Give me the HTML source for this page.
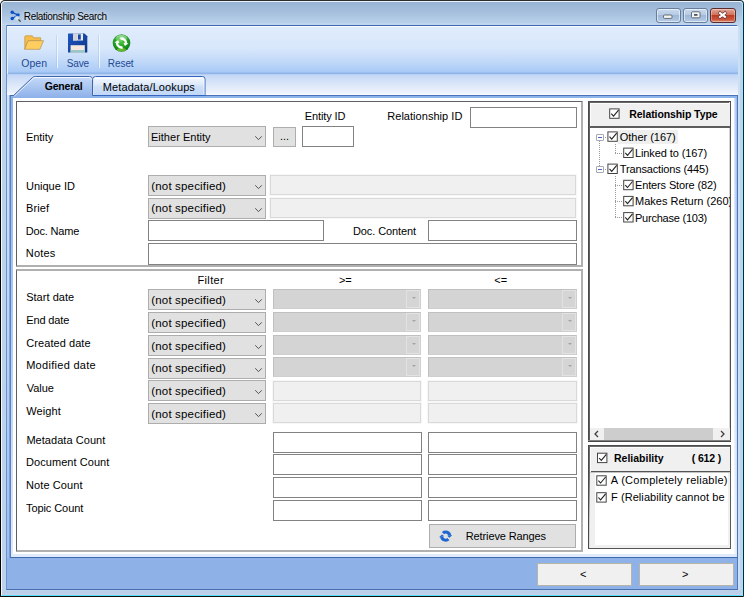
<!DOCTYPE html>
<html lang="en"><head><meta charset="utf-8"><title>Relationship Search</title>
<style>
html,body{margin:0;padding:0;background:#fff}
body{width:745px;height:600px;overflow:hidden;position:relative;font-family:"Liberation Sans",sans-serif}
.a{position:absolute;box-sizing:border-box}
.t{position:absolute;white-space:nowrap;display:block}
svg{position:absolute;overflow:visible}
/* window frame */
#w0{left:0;top:0;width:744px;height:597px;background:linear-gradient(to right,#000 0,#2c2c2c 6px,#2c2c2c 735px,#042c38 100%);border-radius:5px 4px 1px 1px}
#w1{left:1px;top:1px;width:742px;height:595px;border-radius:4px 3px 0 0;background:#fff;
 border-top:1px solid #e9f3fb;border-left:1px solid #f4f8fd;border-right:1px solid #9fe3ff;border-bottom:1px solid #4fe3ff;
 }
#w2{left:2px;top:2px;width:740px;height:593px;border-radius:3px 2px 0 0;
 background:linear-gradient(to bottom,#93afcf 0,#9bb6d5 1px,#a3bddb 9px,#b9d1eb 21px,#c4d8ef 22px,#bbd3ec 24px,#bbd3ec 100%)}
#w2b{left:2px;top:590px;width:740px;height:5px;background:linear-gradient(to bottom,#bcd3ec 0,#b9cfe9 3px,#cfd0e8 5px)}
#cl{left:6px;top:25px;width:732px;height:565px;background:#8eb1e8;border:1px solid #4068ae;border-left-color:#6e92c8;border-right-color:#5277b8;border-bottom-color:#4a70b0;border-radius:0 2px 0 0}
#rfr{left:738px;top:27px;width:2px;height:563px;background:#cbdff5}
/* toolbar */
#tb{left:7px;top:26px;width:731px;height:48px;background:linear-gradient(to bottom,#f4faff 0,#f4faff 1px,#e0ecfc 1px,#d8e7fb 22px,#c4dbf9 34px,#a9c9f6 46px,#8fb4e8 47px,#8fb4e8 48px)}
#tbl{left:7px;top:26px;width:1px;height:48px;background:#eaf2fd}
.sep{width:1px;top:35px;height:33px;background:#f0f6fe;box-shadow:-1px 0 0 rgba(150,180,225,.35)}
/* tab strip */
#ts{left:7px;top:74px;width:731px;height:21px;background:linear-gradient(to bottom,#a8c8f4 0,#c4d7f5 1px,#d6e3f8 8px,#eef3fc 19px,#fafcff 21px)}
#pg{left:10px;top:95px;width:728px;height:463px;background:linear-gradient(to bottom,#8eb4ec 0,#a9c8f3 45%,#cfe0f8 80%,#dfeafb 100%);border:1px solid #5b82c4;border-right-color:#5277b8;border-top-color:#4a74ba;border-bottom-color:#4068ae}
#pgl{left:7px;top:95px;width:3px;height:463px;background:linear-gradient(to right,rgba(0,0,0,0) 0,rgba(0,0,0,0) 2px,rgba(70,110,180,.45) 2px),linear-gradient(to bottom,#d2e3fa 0,#bdd6f7 45%,#9dbef0 100%)}
#pw{left:13px;top:98px;width:721px;height:456px;background:#fff}
#pgt{left:11px;top:96px;width:726px;height:2px;background:#8eb4ec}
#pgr{left:734px;top:98px;width:3px;height:456px;background:linear-gradient(to right,rgba(255,255,255,.75),rgba(255,255,255,0))}
/* panels */
.pn{background:#fff;border-style:solid;border-color:#606060 #b0b0b0 #b0b0b0 #606060}
.tx{background:#fff;border:1px solid #828282}
.dt{background:#f0f0f0;border:1px solid #d9d9d9;box-shadow:0 0 0 1px #f7f7f7}
.cb{background:#e1e1e1;border:1px solid #adadad}
.dc{background:#d4d4d4;border:1px solid;border-color:#c0c0c0 #cfcfcf #cfcfcf #c0c0c0}
.dc i{position:absolute;right:0;top:0;bottom:0;width:14px;box-sizing:border-box;border:1px solid #e2e2e2;background:#d5d5d5}
.dc b{position:absolute;right:4px;top:7px;width:0;height:0;border:2px solid transparent;border-top:2.500px solid #a4a4a4;border-bottom:0}
.bt{background:#e1e1e1;border:1px solid #adadad}
.nb{background:#f0f0f0;border:1px solid #b7b4aa}
.ck{background:#fff;border:1px solid #333}
.rp{background:#fff;border:1px solid #4c4c4c;box-shadow:inset 0 0 0 1px #686868}
.hd{background:#f0f0f0;border-bottom:2px solid #5c5c5c;box-shadow:inset 1px 1px 0 #fcfcfc}
#t0{text-shadow:0 0 4px rgba(255,255,255,.75),0 0 7px rgba(255,255,255,.5)}

.wb{border:1px solid #667d9b;border-radius:3px;background:linear-gradient(to bottom,#c9daee 0,#b4cae5 45%,#9fb8d8 50%,#b4cbe6 100%);box-shadow:inset 0 0 0 1px rgba(255,255,255,.55)}
.wc{border-color:#5a2a2c;background:linear-gradient(to bottom,#e2a697 0,#d0725c 45%,#bd3c22 50%,#c9563c 80%,#dc8c72 100%);box-shadow:inset 0 0 0 1px rgba(255,255,255,.35)}
</style></head><body>
<div class="a" id="w0"></div><div class="a" style="left:0;top:596px;width:743px;height:1px;background:#120c0c"></div><div class="a" id="w1"></div><div class="a" id="w2"></div><div class="a" id="w2b"></div>
<div class="a" id="cl"></div><div class="a" id="rfr"></div>
<div class="a" id="tb"></div><div class="a" id="tbl"></div>
<div class="a sep" style="left:57px"></div><div class="a sep" style="left:99px"></div>
<div class="a" id="ts"></div>
<div class="a" id="pgl"></div><div class="a" id="pg"></div><div class="a" id="pgt"></div><div class="a" id="pw"></div><div class="a" id="pgr"></div>

<svg class="a" style="left:0;top:0" width="745" height="100" viewBox="0 0 745 100">
<defs>
<linearGradient id="gt" x1="0" y1="0" x2="0" y2="1"><stop offset="0" stop-color="#cfe0f9"/><stop offset=".15" stop-color="#bdd4f6"/><stop offset="1" stop-color="#8cb0e9"/></linearGradient>
<linearGradient id="mt" x1="0" y1="0" x2="0" y2="1"><stop offset="0" stop-color="#f6f9fe"/><stop offset=".45" stop-color="#dbe8fa"/><stop offset=".5" stop-color="#cfe0f8"/><stop offset="1" stop-color="#c0d7f6"/></linearGradient>
</defs>
<path d="M93,95.5 V79 Q93,76.5 95.5,76.5 H202.500 Q205,76.500 205,79 V95.5 Z" fill="url(#mt)" stroke="#3565c0" stroke-width="1"/>
<path d="M93.5,95 V78.5 H204 V95" fill="none" stroke="#fff" stroke-opacity=".7" stroke-width="1"/>
<path d="M11,98 V96 L13.500,95.5 L32.500,77.500 Q33.500,76.500 35.500,76.500 H89.500 Q92.500,76.500 92.500,79.500 V96 V98 Z" fill="url(#gt)"/>
<path d="M10.500,95.500 H13.500 L32.500,77.500 Q33.500,76.500 35.500,76.500 H89.500 Q92.500,76.500 92.500,79.500 V95.500" fill="none" stroke="#3f66ad" stroke-width="1"/>
<path d="M14.500,96 L33.500,78.100 Q34.200,77.500 35.500,77.500 H89.500 Q91.500,77.500 91.500,79.500" fill="none" stroke="#fff" stroke-opacity=".75" stroke-width="1"/>
</svg>


<svg class="a" style="left:0;top:0" width="745" height="75" viewBox="0 0 745 75">
<defs>
<linearGradient id="sv" x1="0" y1="0" x2="1" y2="1"><stop offset="0" stop-color="#1f55c4"/><stop offset="1" stop-color="#0d3888"/></linearGradient>
<radialGradient id="gr" cx=".45" cy=".35" r=".7"><stop offset="0" stop-color="#5ccf4a"/><stop offset=".55" stop-color="#22a022"/><stop offset="1" stop-color="#0b6e14"/></radialGradient>
<linearGradient id="gh" x1="0" y1="0" x2="0" y2="1"><stop offset="0" stop-color="#fff" stop-opacity=".55"/><stop offset="1" stop-color="#fff" stop-opacity="0"/></linearGradient>
</defs>
<!-- title icon -->
<g stroke="#0b4fc4" stroke-width="1.300" fill="#0b4fc4">
<path d="M12.200,12.300 L18,15 L12.200,18.500" fill="none"/>
<circle cx="12.200" cy="12.300" r="1.700" stroke="none"/><circle cx="18" cy="15" r="1.700" stroke="none"/><circle cx="12.200" cy="18.500" r="1.700" stroke="none"/>
</g>
<circle cx="17" cy="18.200" r="2" fill="#d9e4ee" stroke="#c3d6e6" stroke-width=".6"/>
<path d="M18.700,19.800 L20.300,21.300" stroke="#4a4a4a" stroke-width="1.200" stroke-linecap="round"/>
<!-- open -->
<path d="M24.800,49.200 V36.600 Q24.800,35.800 25.600,35.800 H32.400 L33.600,37.800 H40.700 V41 H28 Z" fill="#f7bd4a" stroke="#c39a4a" stroke-width=".8" stroke-linejoin="round"/>
<path d="M28,40.700 H43.500 L39.900,49.300 H24.700 Z" fill="#ffce5e" stroke="#b9975c" stroke-width=".8" stroke-linejoin="round"/>
<!-- save -->
<path d="M68,34.200 Q68,33.600 68.600,33.600 H84.600 L87.300,36.300 V52 Q87.300,52.600 86.700,52.600 H68.600 Q68,52.600 68,52 Z" fill="url(#sv)"/>
<rect x="73" y="33.600" width="10" height="6.900" fill="#ececec"/>
<rect x="73" y="33.600" width="4" height="6.900" fill="#d4d4d6"/>
<rect x="77.900" y="34.400" width="2.900" height="5.200" fill="#1848aa"/>
<rect x="70.600" y="45.200" width="14.200" height="7.400" fill="#f6e8dc"/>
<rect x="70.600" y="50" width="14.200" height="2.600" fill="#9ac7cb"/>
<!-- reset -->
<circle cx="121.500" cy="43" r="8.800" fill="url(#gr)"/>
<ellipse cx="121.500" cy="49.800" rx="4.500" ry="1.700" fill="#a4e23c" opacity=".55"/>
<ellipse cx="121.500" cy="38.500" rx="6" ry="3.600" fill="url(#gh)"/>
<g fill="none" stroke="#fff" stroke-width="2.300">
<path d="M122.66,47.35 A4.5,4.5 0 0 1 117.02,42.61"/>
<path d="M120.34,38.65 A4.5,4.5 0 0 1 125.98,43.39"/>
</g>
<path d="M118.10,40.05 L114.46,42.63 L119.55,42.90 Z" fill="#fff"/>
<path d="M124.90,45.95 L128.54,43.37 L123.45,43.10 Z" fill="#fff"/>
<!-- retrieve icon placed elsewhere -->
</svg>


<div class="a wb" style="left:656px;top:8px;width:25px;height:15px"></div>
<div class="a wb" style="left:683px;top:8px;width:25px;height:15px"></div>
<div class="a wb wc" style="left:710px;top:8px;width:26px;height:15px"></div>
<svg class="a" style="left:650px;top:0" width="95" height="26" viewBox="650 0 95 26">
<rect x="663.500" y="15" width="8.500" height="3.400" rx="1" fill="#f4f4f4" stroke="#5a5f68" stroke-width=".9"/>
<rect x="691.500" y="11.800" width="8.500" height="6" rx="1" fill="#f6f6f6" stroke="#5a5f68" stroke-width=".9"/>
<rect x="694" y="14" width="3.500" height="1.800" fill="#4a5668"/>
<path d="M720,13.100 L725,16.900 M725,13.100 L720,16.900" stroke="#6a3a38" stroke-width="3.300" stroke-linecap="square"/>
<path d="M720,13.100 L725,16.900 M725,13.100 L720,16.900" stroke="#fff" stroke-width="2" stroke-linecap="square"/>
</svg>

<!-- left top panel -->
<div class="a pn" style="left:16px;top:101px;width:567px;height:166px;border-width:1px 2px 2px 1px"></div>
<div class="a cb" style="left:148px;top:126px;width:118px;height:21px"></div>
<div class="a bt" style="left:273px;top:127px;width:23px;height:20px"></div>
<div class="a tx" style="left:302px;top:126px;width:52px;height:21px"></div>
<div class="a tx" style="left:470px;top:107px;width:107px;height:21px"></div>
<div class="a cb" style="left:148px;top:175px;width:118px;height:21px"></div>
<div class="a cb" style="left:148px;top:198px;width:118px;height:21px"></div>
<div class="a dt" style="left:270px;top:175px;width:306px;height:20px"></div>
<div class="a dt" style="left:270px;top:198px;width:306px;height:20px"></div>
<div class="a tx" style="left:148px;top:220px;width:176px;height:21px"></div>
<div class="a tx" style="left:428px;top:220px;width:149px;height:21px"></div>
<div class="a tx" style="left:148px;top:243px;width:429px;height:22px"></div>
<!-- left bottom panel -->
<div class="a pn" style="left:16px;top:269px;width:567px;height:283px;border-width:2px 2px 2px 1px;border-top-color:#b0b0b0;border-bottom-color:#b0b0b0"></div>
<div class="a cb" style="left:148px;top:289px;width:118px;height:21px"></div>
<svg class="a" style="left:254px;top:298px" width="9" height="6" viewBox="0 0 9 6"><path d="M1.200,1.300 L4.500,4.600 L7.800,1.300" fill="none" stroke="#4a4a4a" stroke-width="0.950"/></svg>
<div class="a cb" style="left:148px;top:312px;width:118px;height:21px"></div>
<svg class="a" style="left:254px;top:321px" width="9" height="6" viewBox="0 0 9 6"><path d="M1.200,1.300 L4.500,4.600 L7.800,1.300" fill="none" stroke="#4a4a4a" stroke-width="0.950"/></svg>
<div class="a cb" style="left:148px;top:335px;width:118px;height:21px"></div>
<svg class="a" style="left:254px;top:344px" width="9" height="6" viewBox="0 0 9 6"><path d="M1.200,1.300 L4.500,4.600 L7.800,1.300" fill="none" stroke="#4a4a4a" stroke-width="0.950"/></svg>
<div class="a cb" style="left:148px;top:358px;width:118px;height:21px"></div>
<svg class="a" style="left:254px;top:367px" width="9" height="6" viewBox="0 0 9 6"><path d="M1.200,1.300 L4.500,4.600 L7.800,1.300" fill="none" stroke="#4a4a4a" stroke-width="0.950"/></svg>
<div class="a cb" style="left:148px;top:380px;width:118px;height:21px"></div>
<svg class="a" style="left:254px;top:389px" width="9" height="6" viewBox="0 0 9 6"><path d="M1.200,1.300 L4.500,4.600 L7.800,1.300" fill="none" stroke="#4a4a4a" stroke-width="0.950"/></svg>
<div class="a cb" style="left:148px;top:403px;width:118px;height:21px"></div>
<svg class="a" style="left:254px;top:412px" width="9" height="6" viewBox="0 0 9 6"><path d="M1.200,1.300 L4.500,4.600 L7.800,1.300" fill="none" stroke="#4a4a4a" stroke-width="0.950"/></svg>
<div class="a dc" style="left:273px;top:289px;width:148px;height:20px"><i></i><b></b></div>
<div class="a dc" style="left:428px;top:289px;width:149px;height:20px"><i></i><b></b></div>
<div class="a dc" style="left:273px;top:312px;width:148px;height:20px"><i></i><b></b></div>
<div class="a dc" style="left:428px;top:312px;width:149px;height:20px"><i></i><b></b></div>
<div class="a dc" style="left:273px;top:335px;width:148px;height:20px"><i></i><b></b></div>
<div class="a dc" style="left:428px;top:335px;width:149px;height:20px"><i></i><b></b></div>
<div class="a dc" style="left:273px;top:357px;width:148px;height:20px"><i></i><b></b></div>
<div class="a dc" style="left:428px;top:357px;width:149px;height:20px"><i></i><b></b></div>
<div class="a dt" style="left:273px;top:381px;width:148px;height:20px"></div>
<div class="a dt" style="left:428px;top:381px;width:149px;height:20px"></div>
<div class="a dt" style="left:273px;top:403px;width:148px;height:20px"></div>
<div class="a dt" style="left:428px;top:403px;width:149px;height:20px"></div>
<div class="a tx" style="left:273px;top:432px;width:149px;height:21px"></div>
<div class="a tx" style="left:428px;top:432px;width:149px;height:21px"></div>
<div class="a tx" style="left:273px;top:454px;width:149px;height:21px"></div>
<div class="a tx" style="left:428px;top:454px;width:149px;height:21px"></div>
<div class="a tx" style="left:273px;top:477px;width:149px;height:21px"></div>
<div class="a tx" style="left:428px;top:477px;width:149px;height:21px"></div>
<div class="a tx" style="left:273px;top:500px;width:149px;height:21px"></div>
<div class="a tx" style="left:428px;top:500px;width:149px;height:21px"></div>
<svg class="a" style="left:254px;top:135px" width="9" height="6" viewBox="0 0 9 6"><path d="M1.200,1.300 L4.500,4.600 L7.800,1.300" fill="none" stroke="#4a4a4a" stroke-width="0.950"/></svg>
<svg class="a" style="left:254px;top:184px" width="9" height="6" viewBox="0 0 9 6"><path d="M1.200,1.300 L4.500,4.600 L7.800,1.300" fill="none" stroke="#4a4a4a" stroke-width="0.950"/></svg>
<svg class="a" style="left:254px;top:207px" width="9" height="6" viewBox="0 0 9 6"><path d="M1.200,1.300 L4.500,4.600 L7.800,1.300" fill="none" stroke="#4a4a4a" stroke-width="0.950"/></svg>
<div class="a bt" style="left:429px;top:524px;width:147px;height:24px"></div>
<svg class="a" style="left:438px;top:528px" width="16" height="16" viewBox="438 528 16 16">
<g fill="none" stroke="#1e66d0" stroke-width="3">
<path d="M442.96,533.05 A4.1,4.1 0 0 1 449.76,535.53"/>
<path d="M448.44,539.15 A4.1,4.1 0 0 1 441.64,536.67"/>
</g>
<path d="M449.45,537.77 L452.33,534.93 L447.14,535.85 Z" fill="#1e66d0"/>
<path d="M441.95,534.43 L439.07,537.27 L444.26,536.35 Z" fill="#1e66d0"/>
</svg>

<div class="a nb" style="left:537px;top:563px;width:95px;height:23px"></div>
<div class="a nb" style="left:639px;top:563px;width:95px;height:23px"></div>
<!-- right top panel -->
<div class="a" style="left:588px;top:101px;width:143px;height:341px;background:#fff"></div>
<div class="a" style="left:588px;top:101px;width:143px;height:2px;background:linear-gradient(to bottom,#4a4a4a 50%,#686868 50%)"></div>
<div class="a" style="left:588px;top:101px;width:2px;height:341px;background:linear-gradient(to right,#4a4a4a 50%,#606060 50%)"></div>
<div class="a" style="left:729px;top:102px;width:2px;height:340px;background:linear-gradient(to right,#d4d4d4 50%,#505050 50%)"></div>
<div class="a" style="left:588px;top:440px;width:143px;height:2px;background:linear-gradient(to bottom,#808080 50%,#484848 50%)"></div>
<div class="a hd" style="left:590px;top:103px;width:140px;height:25px"></div>
<div class="a" style="left:618px;top:130px;width:60px;height:14px;background:#efefef"></div>
<div class="a" style="left:590px;top:428px;width:140px;height:12px;background:#f0f0f0"></div>
<div class="a" style="left:604px;top:428px;width:109px;height:12px;background:#cdcdcd"></div>
<div class="a" style="left:599px;top:141px;width:1px;height:25px;background:repeating-linear-gradient(to bottom,#9a9a9a 0,#9a9a9a 1px,transparent 1px,transparent 2px)"></div>
<div class="a" style="left:603px;top:137px;width:4px;height:1px;background:repeating-linear-gradient(to right,#9a9a9a 0,#9a9a9a 1px,transparent 1px,transparent 2px)"></div>
<div class="a" style="left:603px;top:169px;width:4px;height:1px;background:repeating-linear-gradient(to right,#9a9a9a 0,#9a9a9a 1px,transparent 1px,transparent 2px)"></div>
<div class="a" style="left:615px;top:144px;width:1px;height:10px;background:repeating-linear-gradient(to bottom,#9a9a9a 0,#9a9a9a 1px,transparent 1px,transparent 2px)"></div>
<div class="a" style="left:615px;top:153px;width:8px;height:1px;background:repeating-linear-gradient(to right,#9a9a9a 0,#9a9a9a 1px,transparent 1px,transparent 2px)"></div>
<div class="a" style="left:615px;top:176px;width:1px;height:42px;background:repeating-linear-gradient(to bottom,#9a9a9a 0,#9a9a9a 1px,transparent 1px,transparent 2px)"></div>
<div class="a" style="left:615px;top:185px;width:8px;height:1px;background:repeating-linear-gradient(to right,#9a9a9a 0,#9a9a9a 1px,transparent 1px,transparent 2px)"></div>
<div class="a" style="left:615px;top:201px;width:8px;height:1px;background:repeating-linear-gradient(to right,#9a9a9a 0,#9a9a9a 1px,transparent 1px,transparent 2px)"></div>
<div class="a" style="left:615px;top:217px;width:8px;height:1px;background:repeating-linear-gradient(to right,#9a9a9a 0,#9a9a9a 1px,transparent 1px,transparent 2px)"></div>
<div class="a" style="left:596px;top:134px;width:8px;height:7px;background:#fff;border:1px solid #a6a9b0;border-radius:1px"></div>
<div class="a" style="left:598px;top:137px;width:4px;height:1px;background:#4a66c4"></div>
<div class="a" style="left:596px;top:166px;width:8px;height:7px;background:#fff;border:1px solid #a6a9b0;border-radius:1px"></div>
<div class="a" style="left:598px;top:169px;width:4px;height:1px;background:#4a66c4"></div>
<svg class="a" style="left:607px;top:131px" width="12" height="12" viewBox="0 0 12 12"><rect x="0.90" y="0.90" width="9.400" height="9.400" fill="#fff" stroke="#444" stroke-width="1"/><path d="M2.50,5.70 l2.200,2.400 l5,-6" fill="none" stroke="#222" stroke-width="1.100"/></svg>
<svg class="a" style="left:623px;top:147px" width="12" height="12" viewBox="0 0 12 12"><rect x="0.70" y="1.10" width="9.400" height="9.400" fill="#fff" stroke="#444" stroke-width="1"/><path d="M2.30,5.90 l2.200,2.400 l5,-6" fill="none" stroke="#222" stroke-width="1.100"/></svg>
<svg class="a" style="left:607px;top:163px" width="12" height="12" viewBox="0 0 12 12"><rect x="0.90" y="1.10" width="9.400" height="9.400" fill="#fff" stroke="#444" stroke-width="1"/><path d="M2.50,5.90 l2.200,2.400 l5,-6" fill="none" stroke="#222" stroke-width="1.100"/></svg>
<svg class="a" style="left:623px;top:179px" width="12" height="12" viewBox="0 0 12 12"><rect x="0.70" y="1.30" width="9.400" height="9.400" fill="#fff" stroke="#444" stroke-width="1"/><path d="M2.30,6.10 l2.200,2.400 l5,-6" fill="none" stroke="#222" stroke-width="1.100"/></svg>
<svg class="a" style="left:623px;top:195px" width="12" height="12" viewBox="0 0 12 12"><rect x="0.70" y="1.40" width="9.400" height="9.400" fill="#fff" stroke="#444" stroke-width="1"/><path d="M2.30,6.20 l2.200,2.400 l5,-6" fill="none" stroke="#222" stroke-width="1.100"/></svg>
<svg class="a" style="left:623px;top:212px" width="12" height="12" viewBox="0 0 12 12"><rect x="0.70" y="0.60" width="9.400" height="9.400" fill="#fff" stroke="#444" stroke-width="1"/><path d="M2.30,5.40 l2.200,2.400 l5,-6" fill="none" stroke="#222" stroke-width="1.100"/></svg>
<svg class="a" style="left:590px;top:428px" width="140" height="12" viewBox="0 0 140 12"><path d="M8,3 L5,6 L8,9" fill="none" stroke="#404040" stroke-width="1.300"/><path d="M131,3 L134,6 L131,9" fill="none" stroke="#404040" stroke-width="1.300"/></svg>
<!-- right bottom panel -->
<div class="a" style="left:588px;top:445px;width:143px;height:104px;background:#f0f0f0"></div>
<div class="a hd" style="left:590px;top:447px;width:140px;height:26px;border-bottom:1px solid #c4c4c4;box-shadow:inset 1px 1px 0 #fcfcfc, inset 0 -1px 0 #555"></div>
<div class="a" style="left:588px;top:445px;width:143px;height:2px;background:linear-gradient(to bottom,#4c4c4c 50%,#6a6a6a 50%)"></div>
<div class="a" style="left:588px;top:445px;width:1px;height:104px;background:#4a4a4a"></div>
<div class="a" style="left:589px;top:446px;width:1px;height:102px;background:linear-gradient(to bottom,#686868 0,#707070 30%,#c8c8c8 70%,#e0e0e0 100%)"></div>
<div class="a" style="left:730px;top:446px;width:1px;height:103px;background:#5a5a5a"></div>
<div class="a" style="left:588px;top:548px;width:143px;height:1px;background:#555"></div>
<div class="a" style="left:595px;top:473px;width:133px;height:72px;background:#fff"></div>
<svg class="a" style="left:609px;top:108px" width="12" height="12" viewBox="0 0 12 12"><rect x="0.70" y="0.90" width="9.400" height="9.400" fill="#fff" stroke="#444" stroke-width="1"/><path d="M2.30,5.70 l2.200,2.400 l5,-6" fill="none" stroke="#222" stroke-width="1.100"/></svg>
<svg class="a" style="left:597px;top:452px" width="12" height="12" viewBox="0 0 12 12"><rect x="0.50" y="1.20" width="9.400" height="9.400" fill="#fff" stroke="#444" stroke-width="1"/><path d="M2.10,6.00 l2.200,2.400 l5,-6" fill="none" stroke="#222" stroke-width="1.100"/></svg>
<svg class="a" style="left:596px;top:475px" width="12" height="12" viewBox="0 0 12 12"><rect x="0.80" y="0.80" width="9.400" height="9.400" fill="#fff" stroke="#444" stroke-width="1"/><path d="M2.40,5.60 l2.200,2.400 l5,-6" fill="none" stroke="#222" stroke-width="1.100"/></svg>
<svg class="a" style="left:596px;top:492px" width="12" height="12" viewBox="0 0 12 12"><rect x="0.80" y="0.70" width="9.400" height="9.400" fill="#fff" stroke="#444" stroke-width="1"/><path d="M2.40,5.50 l2.200,2.400 l5,-6" fill="none" stroke="#222" stroke-width="1.100"/></svg>
<span class="t" id="t0" style="left:23.85px;top:12.00px;font-size:10px;line-height:10px;letter-spacing:-0.347px;color:#000;">Relationship Search</span>
<span class="t" id="t1" style="left:21.25px;top:58.00px;font-size:10.5px;line-height:10.5px;letter-spacing:0.053px;color:#1e4a94;">Open</span>
<span class="t" id="t2" style="left:66.80px;top:59.00px;font-size:10px;line-height:10px;letter-spacing:-0.160px;color:#1e4a94;">Save</span>
<span class="t" id="t3" style="left:107.85px;top:59.00px;font-size:10px;line-height:10px;letter-spacing:-0.080px;color:#1e4a94;">Reset</span>
<span class="t" id="t4" style="left:44.70px;top:81.00px;font-size:10.5px;line-height:10.5px;letter-spacing:-0.187px;color:#000;font-weight:700;">General</span>
<span class="t" id="t5" style="left:102.75px;top:82.00px;font-size:11px;line-height:11px;letter-spacing:0.107px;color:#000;">Metadata/Lookups</span>
<span class="t" id="t6" style="left:25.90px;top:132.00px;font-size:11px;line-height:11px;letter-spacing:-0.032px;color:#000;">Entity</span>
<span class="t" id="t7" style="left:26.00px;top:181.00px;font-size:11px;line-height:11px;letter-spacing:0.000px;color:#000;">Unique ID</span>
<span class="t" id="t8" style="left:25.90px;top:203.00px;font-size:11px;line-height:11px;letter-spacing:0.160px;color:#000;">Brief</span>
<span class="t" id="t9" style="left:25.70px;top:226.00px;font-size:11px;line-height:11px;letter-spacing:-0.160px;color:#000;">Doc. Name</span>
<span class="t" id="t10" style="left:25.75px;top:248.00px;font-size:11px;line-height:11px;letter-spacing:0.200px;color:#000;">Notes</span>
<span class="t" id="t11" style="left:304.80px;top:111.00px;font-size:11px;line-height:11px;letter-spacing:-0.120px;color:#000;">Entity ID</span>
<span class="t" id="t12" style="left:387.25px;top:111.00px;font-size:11px;line-height:11px;letter-spacing:0.034px;color:#000;">Relationship ID</span>
<span class="t" id="t13" style="left:352.90px;top:226.00px;font-size:11px;line-height:11px;letter-spacing:-0.087px;color:#000;">Doc. Content</span>
<span class="t" id="t14" style="left:150.95px;top:132.00px;font-size:11px;line-height:11px;letter-spacing:0.027px;color:#000;">Either Entity</span>
<span class="t" id="t15" style="left:151.25px;top:181.00px;font-size:11.5px;line-height:11.5px;letter-spacing:0.171px;color:#000;">(not specified)</span>
<span class="t" id="t16" style="left:151.25px;top:203.00px;font-size:11.5px;line-height:11.5px;letter-spacing:0.171px;color:#000;">(not specified)</span>
<span class="t" id="t17" style="left:151.25px;top:295.00px;font-size:11.5px;line-height:11.5px;letter-spacing:0.171px;color:#000;">(not specified)</span>
<span class="t" id="t18" style="left:151.25px;top:318.00px;font-size:11.5px;line-height:11.5px;letter-spacing:0.171px;color:#000;">(not specified)</span>
<span class="t" id="t19" style="left:151.25px;top:341.00px;font-size:11.5px;line-height:11.5px;letter-spacing:0.171px;color:#000;">(not specified)</span>
<span class="t" id="t20" style="left:151.25px;top:363.00px;font-size:11.5px;line-height:11.5px;letter-spacing:0.171px;color:#000;">(not specified)</span>
<span class="t" id="t21" style="left:151.25px;top:386.00px;font-size:11.5px;line-height:11.5px;letter-spacing:0.171px;color:#000;">(not specified)</span>
<span class="t" id="t22" style="left:151.25px;top:409.00px;font-size:11.5px;line-height:11.5px;letter-spacing:0.171px;color:#000;">(not specified)</span>
<span class="t" id="t23" style="left:280.00px;top:131.00px;font-size:11px;line-height:11px;letter-spacing:0.000px;color:#000;">...</span>
<span class="t" id="t24" style="left:197.50px;top:275.00px;font-size:11px;line-height:11px;letter-spacing:0.352px;color:#000;">Filter</span>
<span class="t" id="t25" style="left:338.95px;top:275.00px;font-size:11px;line-height:11px;letter-spacing:0.000px;color:#000;">&gt;=</span>
<span class="t" id="t26" style="left:494.30px;top:275.00px;font-size:11px;line-height:11px;letter-spacing:0.000px;color:#000;">&lt;=</span>
<span class="t" id="t27" style="left:26.15px;top:292.00px;font-size:11px;line-height:11px;letter-spacing:0.036px;color:#000;">Start date</span>
<span class="t" id="t28" style="left:26.20px;top:315.00px;font-size:11px;line-height:11px;letter-spacing:-0.114px;color:#000;">End date</span>
<span class="t" id="t29" style="left:26.35px;top:338.00px;font-size:11px;line-height:11px;letter-spacing:0.058px;color:#000;">Created date</span>
<span class="t" id="t30" style="left:26.15px;top:360.00px;font-size:11px;line-height:11px;letter-spacing:0.293px;color:#000;">Modified date</span>
<span class="t" id="t31" style="left:26.80px;top:383.00px;font-size:11px;line-height:11px;letter-spacing:-0.040px;color:#000;">Value</span>
<span class="t" id="t32" style="left:26.15px;top:406.00px;font-size:11px;line-height:11px;letter-spacing:0.128px;color:#000;">Weight</span>
<span class="t" id="t33" style="left:26.40px;top:435.00px;font-size:11px;line-height:11px;letter-spacing:0.049px;color:#000;">Metadata Count</span>
<span class="t" id="t34" style="left:26.00px;top:457.00px;font-size:11px;line-height:11px;letter-spacing:0.062px;color:#000;">Document Count</span>
<span class="t" id="t35" style="left:26.00px;top:480.00px;font-size:11px;line-height:11px;letter-spacing:0.089px;color:#000;">Note Count</span>
<span class="t" id="t36" style="left:26.00px;top:503.00px;font-size:11px;line-height:11px;letter-spacing:-0.080px;color:#000;">Topic Count</span>
<span class="t" id="t37" style="left:465.80px;top:531.00px;font-size:11px;line-height:11px;letter-spacing:-0.126px;color:#000;">Retrieve Ranges</span>
<span class="t" id="t38" style="left:579.90px;top:569.00px;font-size:11px;line-height:11px;letter-spacing:0.000px;color:#000;">&lt;</span>
<span class="t" id="t39" style="left:682.00px;top:569.00px;font-size:11px;line-height:11px;letter-spacing:0.000px;color:#000;">&gt;</span>
<span class="t" id="t40" style="left:629.35px;top:109.00px;font-size:10.5px;line-height:10.5px;letter-spacing:-0.090px;color:#000;font-weight:700;">Relationship Type</span>
<span class="t" id="t41" style="left:619.80px;top:132.00px;font-size:11px;line-height:11px;letter-spacing:-0.032px;color:#000;">Other (167)</span>
<span class="t" id="t42" style="left:634.95px;top:148.00px;font-size:11px;line-height:11px;letter-spacing:-0.091px;color:#000;">Linked to (167)</span>
<span class="t" id="t43" style="left:619.75px;top:164.00px;font-size:11px;line-height:11px;letter-spacing:-0.141px;color:#000;">Transactions (445)</span>
<span class="t" id="t44" style="left:634.95px;top:180.00px;font-size:11px;line-height:11px;letter-spacing:-0.130px;color:#000;">Enters Store (82)</span>
<span class="t" id="t45" style="left:635.00px;top:196.00px;font-size:11px;line-height:11px;letter-spacing:0.000px;color:#000;width:95.00px;overflow:hidden;">Makes Return (260)</span>
<span class="t" id="t46" style="left:634.95px;top:213.00px;font-size:11px;line-height:11px;letter-spacing:-0.222px;color:#000;">Purchase (103)</span>
<span class="t" id="t47" style="left:614.00px;top:453.00px;font-size:10.5px;line-height:10.5px;letter-spacing:0.000px;color:#000;font-weight:700;">Reliability</span>
<span class="t" id="t48" style="left:691.75px;top:453.00px;font-size:10.5px;line-height:10.5px;letter-spacing:-0.133px;color:#000;font-weight:700;">( 612 )</span>
<span class="t" id="t49" style="left:610.80px;top:475.00px;font-size:11px;line-height:11px;letter-spacing:0.276px;color:#000;">A (Completely reliable)</span>
<span class="t" id="t50" style="left:611.00px;top:492.00px;font-size:11px;line-height:11px;letter-spacing:0.070px;color:#000;">F (Reliability cannot be</span>
</body></html>
